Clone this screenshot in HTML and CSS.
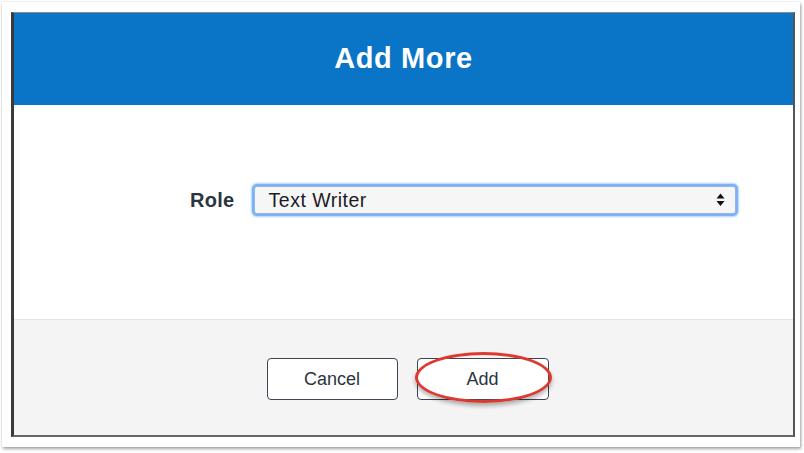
FILE: index.html
```html
<!DOCTYPE html>
<html lang="en">
<head>
<meta charset="utf-8">
<title>Add More</title>
<link rel="stylesheet" href="styles.css">
</head>
<body>
<div class="frame">
  <div class="dialog">
    <header class="dialog-header">
      <h1 class="dialog-title">Add More</h1>
    </header>
    <main class="dialog-body">
      <div class="form-row">
        <label class="form-label">Role</label>
        <div class="select">
          <span class="select-value">Text Writer</span>
          <svg class="select-arrows" width="9" height="14" viewBox="0 0 9 14" aria-hidden="true">
            <path d="M4.5 0.5 L8.5 5.5 L0.5 5.5 Z" fill="#111"/>
            <path d="M0.5 8 L8.5 8 L4.5 13 Z" fill="#111"/>
          </svg>
        </div>
      </div>
    </main>
    <footer class="dialog-footer">
      <button class="btn" type="button">Cancel</button>
      <button class="btn btn-add" type="button">Add<span class="highlight"></span></button>
    </footer>
  </div>
</div>
</body>
</html>
```

FILE: styles.css
```css
html, body {
  margin: 0;
  padding: 0;
  background: #ffffff;
}

body {
  width: 804px;
  height: 453px;
  overflow: hidden;
  font-family: "Liberation Sans", Arial, sans-serif;
  color: #2c3440;
}

.frame {
  box-sizing: border-box;
  margin: 2px 0 0 2px;
  width: 798px;
  height: 445px;
  padding: 10px 5px 10px 9px;
  background: #ffffff;
  box-shadow: 1px 2px 3px rgba(0, 0, 0, 0.35), 0 0 1px rgba(0, 0, 0, 0.25);
}

.dialog {
  box-sizing: border-box;
  height: 100%;
  display: flex;
  flex-direction: column;
  border-left: 3px solid #3a3a3a;
  border-right: 2px solid #555555;
  border-bottom: 2px solid #666666;
  border-top: 1px solid #8a8a8a;
  background: #ffffff;
}

.dialog-header {
  height: 92px;
  flex: none;
  background: #0a75c7;
  display: flex;
  align-items: center;
  justify-content: center;
}

.dialog-title {
  margin: 0 0 2px 0;
  font-size: 29px;
  font-weight: bold;
  color: #ffffff;
  letter-spacing: 0.6px;
}

.dialog-body {
  height: 214px;
  flex: none;
  box-sizing: border-box;
  padding-top: 78px;
}

.form-row {
  display: flex;
  align-items: center;
  padding-left: 176px;
  gap: 16px;
}

.form-label {
  font-size: 20px;
  font-weight: bold;
  letter-spacing: 0.3px;
  color: #2c3440;
}

.select {
  box-sizing: border-box;
  width: 482px;
  height: 28px;
  margin: 3px;
  display: flex;
  align-items: center;
  justify-content: space-between;
  padding: 0 10px 0 14px;
  background: #f6f6f6;
  border: 1px solid #8fb6ea;
  border-radius: 3px;
  box-shadow: 0 0 0 2px #7db1f3, 0 0 2px 3px rgba(125, 177, 243, 0.6);
}

.select-value {
  font-size: 19.5px;
  letter-spacing: 0.5px;
  color: #1b1b26;
}

.select-arrows {
  display: block;
}

.dialog-footer {
  flex: 1;
  background: #f4f4f4;
  border-top: 1px solid #e4e4e4;
  display: flex;
  justify-content: center;
  align-items: flex-start;
  padding-top: 38px;
  padding-left: 8px;
  gap: 19px;
}

.btn {
  position: relative;
  box-sizing: border-box;
  width: 131px;
  height: 42px;
  background: #ffffff;
  border: 1px solid #3d4552;
  border-radius: 4px;
  font-family: "Liberation Sans", Arial, sans-serif;
  font-size: 18px;
  color: #2c3440;
  padding: 0;
}

.btn-add {
  width: 132px;
}

.highlight {
  position: absolute;
  left: -3px;
  top: -7px;
  width: 137px;
  height: 51px;
  box-sizing: border-box;
  border: 3px solid #dd3a2f;
  border-radius: 50%;
  box-shadow: 0 3px 4px rgba(0, 0, 0, 0.3);
}
```
